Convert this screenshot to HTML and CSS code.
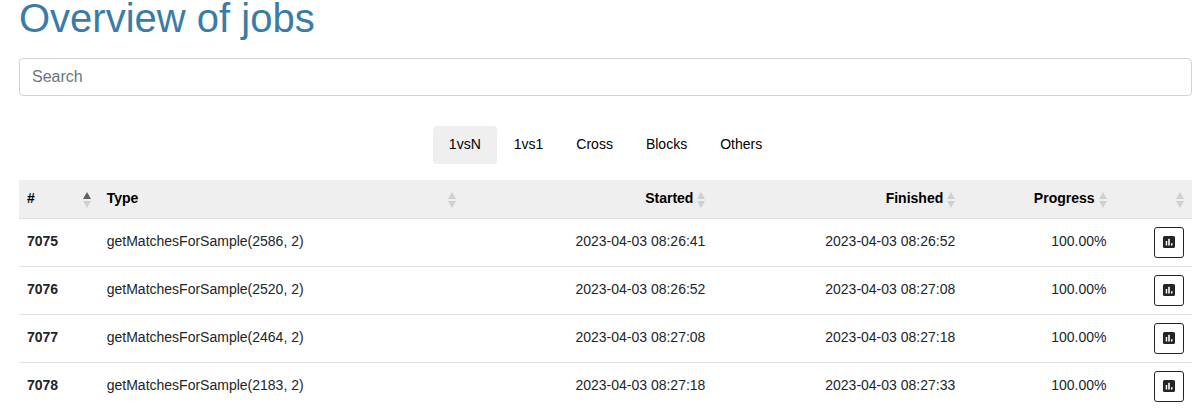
FILE: index.html
```html
<!DOCTYPE html>
<html lang="en">
<head>
<meta charset="utf-8">
<title>Overview of jobs</title>
<link rel="stylesheet" href="styles.css">
</head>
<body>
<svg class="sprite" aria-hidden="true">
  <symbol id="sort" viewBox="0 0 8 16">
    <path class="up" d="M4 0L8 7H0Z"/>
    <path class="down" d="M0 9H8L4 16Z"/>
  </symbol>
  <symbol id="poll" viewBox="0 0 12 12">
    <path fill-rule="evenodd" d="M1.500 0h9A1.500 1.500 0 0 1 12 1.500v9a1.500 1.500 0 0 1-1.500 1.500h-9A1.500 1.500 0 0 1 0 10.500v-9A1.500 1.500 0 0 1 1.500 0zM2.700 5v4.500H4.200V5zM5.200 2.700v6.800h1.600v-6.800zM8 7.300v2.200h1.500V7.300z"/>
  </symbol>
</svg>
<main class="page">
  <h1 class="title">Overview of jobs</h1>
  <input class="search" type="text" placeholder="Search" aria-label="Search">
  <nav class="tabs">
    <button class="tab active" type="button">1vsN</button>
    <button class="tab" type="button">1vs1</button>
    <button class="tab" type="button">Cross</button>
    <button class="tab" type="button">Blocks</button>
    <button class="tab" type="button">Others</button>
  </nav>
  <table class="jobs">
    <colgroup>
      <col class="col-id"><col class="col-type"><col class="col-date"><col class="col-date"><col class="col-progress"><col class="col-action">
    </colgroup>
    <thead>
      <tr>
        <th scope="col"><div class="head spread">#<svg class="sort asc"><use href="#sort"/></svg></div></th>
        <th scope="col"><div class="head spread">Type<svg class="sort"><use href="#sort"/></svg></div></th>
        <th scope="col"><div class="head">Started<svg class="sort"><use href="#sort"/></svg></div></th>
        <th scope="col"><div class="head">Finished<svg class="sort"><use href="#sort"/></svg></div></th>
        <th scope="col"><div class="head">Progress<svg class="sort"><use href="#sort"/></svg></div></th>
        <th scope="col" aria-label="Result"><div class="head"><svg class="sort"><use href="#sort"/></svg></div></th>
      </tr>
    </thead>
    <tbody>
      <tr><th scope="row">7075</th><td>getMatchesForSample(2586, 2)</td><td class="num">2023-04-03 08:26:41</td><td class="num">2023-04-03 08:26:52</td><td class="num">100.00%</td><td class="action"><button class="result" type="button" aria-label="Show result"><svg class="poll"><use href="#poll"/></svg></button></td></tr>
      <tr><th scope="row">7076</th><td>getMatchesForSample(2520, 2)</td><td class="num">2023-04-03 08:26:52</td><td class="num">2023-04-03 08:27:08</td><td class="num">100.00%</td><td class="action"><button class="result" type="button" aria-label="Show result"><svg class="poll"><use href="#poll"/></svg></button></td></tr>
      <tr><th scope="row">7077</th><td>getMatchesForSample(2464, 2)</td><td class="num">2023-04-03 08:27:08</td><td class="num">2023-04-03 08:27:18</td><td class="num">100.00%</td><td class="action"><button class="result" type="button" aria-label="Show result"><svg class="poll"><use href="#poll"/></svg></button></td></tr>
      <tr><th scope="row">7078</th><td>getMatchesForSample(2183, 2)</td><td class="num">2023-04-03 08:27:18</td><td class="num">2023-04-03 08:27:33</td><td class="num">100.00%</td><td class="action"><button class="result" type="button" aria-label="Show result"><svg class="poll"><use href="#poll"/></svg></button></td></tr>
    </tbody>
  </table>
</main>
</body>
</html>
```
FILE: styles.css
```css
* { box-sizing: border-box; }

body {
  margin: 0;
  background: #fff;
  color: #212529;
  font: 14px/22px "Liberation Sans", Arial, sans-serif;
}

.sprite { display: none; }

.page {
  display: flex;
  flex-direction: column;
  padding: 0 3px 0 19px;
}

.title {
  margin: 0 0 22px;
  color: #3a7ca8;
  font-size: 40px;
  font-weight: 400;
  line-height: 36px;
}

.search {
  width: 100%;
  height: 38px;
  padding: 6px 12px;
  border: 1px solid #ced4da;
  border-radius: 4px;
  background: #fff;
  color: #212529;
  font: inherit;
  font-size: 16px;
}

.search::placeholder { color: #6c757d; opacity: 1; }

.tabs {
  display: flex;
  justify-content: center;
  gap: 1px;
  margin: 30px 0 16px;
}

.tab {
  padding: 7px 16px 9px;
  border: 0;
  border-radius: 4px;
  background: none;
  color: #000;
  font: inherit;
}

.tab.active { background: #efefef; }

.jobs {
  width: 100%;
  table-layout: fixed;
  border-collapse: separate;
  border-spacing: 0;
}

.col-id { width: 6.8%; }
.col-type { width: 31.1%; }
.col-date { width: 21.3%; }
.col-progress { width: 12.9%; }
.col-action { width: 6.6%; }

.jobs th,
.jobs td {
  padding: 6px 8px 10px;
  border-bottom: 1px solid #dee2e6;
  text-align: left;
  vertical-align: middle;
}

.jobs thead th {
  padding: 7px 8px 9px;
  background: #efefef;
  color: #000;
}

.jobs .action { padding: 8px; }

.jobs .num { text-align: right; }

.head {
  display: flex;
  align-items: flex-end;
  justify-content: flex-end;
  gap: 4px;
  min-height: 22px;
}

.head.spread { justify-content: space-between; }

.sort { width: 8px; height: 16px; margin-bottom: 1px; fill: #d0d0d0; }
.sort.asc { --up: #606060; }
.up { fill: var(--up, #d0d0d0); }

.result {
  display: flex;
  align-items: center;
  justify-content: center;
  width: 30px;
  height: 31px;
  margin-left: auto;
  padding: 0 0 2px;
  border: 1px solid #212529;
  border-radius: 3px;
  background: #fff;
  color: #212529;
}

.poll { width: 12px; height: 12px; fill: currentColor; }
```
